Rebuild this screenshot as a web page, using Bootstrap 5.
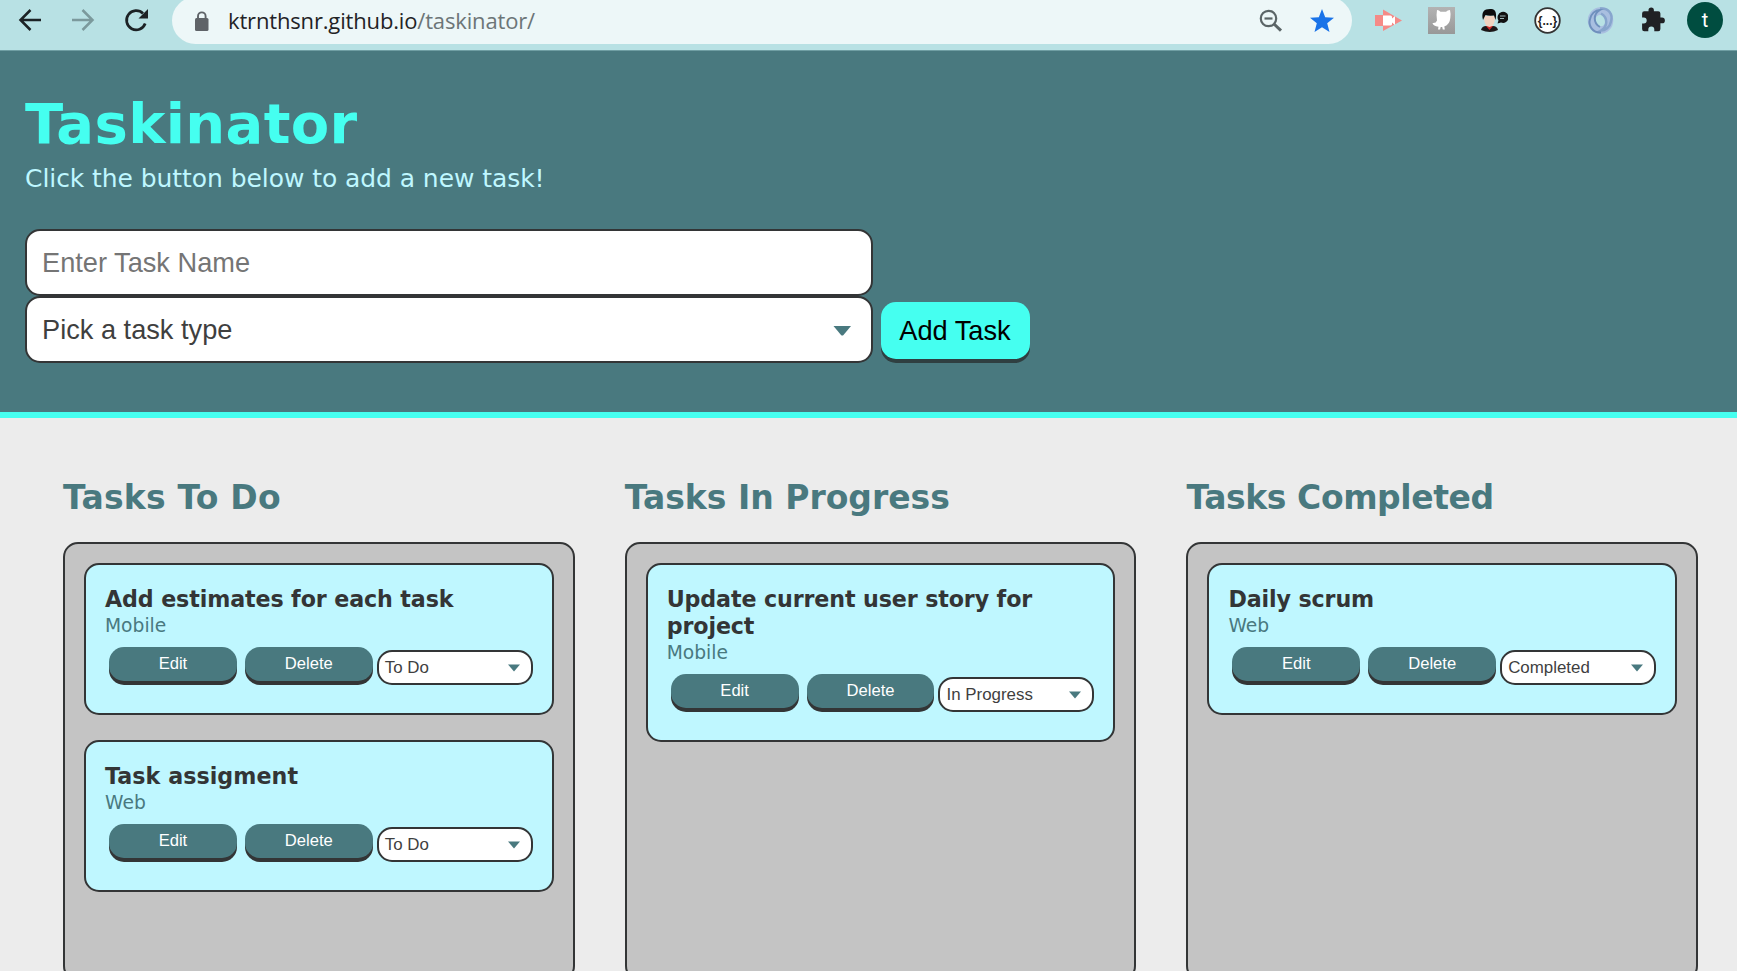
<!DOCTYPE html>
<html lang="en">
<head>
<meta charset="utf-8">
<title>Taskinator</title>
<link href="https://cdn.jsdelivr.net/npm/bootstrap@5.3.0/dist/css/bootstrap.min.css" rel="stylesheet">
<style>
:root{--teal:#49797f;--aqua:#45fff0;--ice:#bff7ff;--ink:#333536}
body{width:1737px;height:971px;background:#ececec;font-family:"DejaVu Sans",sans-serif;line-height:normal}
.chrome{height:50px;background:#b8e1e4}
.chrome svg{display:block;flex:none}
.nav-icons{padding-left:16px;gap:26px;height:40px;width:172px}
.omni{width:1180px;height:47px;margin-top:-3px;border-radius:24px;background:#edf7f8;padding:3px 16px 0 21px}
.url{font:22px/40px "Open Sans",sans-serif;color:#1f2326;margin:-5px 0 0 18px;white-space:pre;letter-spacing:-.16px}
.url span{color:#6c7577}
.ext{height:40px;margin-left:23px;gap:26px}
.hero{height:368px;background:var(--teal);border-bottom:6px solid var(--aqua);border-top:1px solid #6f9ea3;padding:39px 25px 0}
.hero h1{font-size:56px;font-weight:700;line-height:68px;color:var(--aqua);margin:0;letter-spacing:.35px}
.hero p{font-size:25px;line-height:30px;color:var(--ice);margin:6px 0 0;letter-spacing:-.07px}
.field{width:848px;height:67px;border:2px solid var(--ink);border-radius:15px;background:#fff;padding:0 18px 0 15px;font:27.2px "Liberation Sans",sans-serif;color:#3f3f3f}
.field::placeholder{color:#757575;opacity:1}
.hero-form{margin-top:35px;gap:8px}
.add{width:149px;height:57px;border:0;border-radius:15px;background:var(--aqua);color:#000;font:27.2px "Liberation Sans",sans-serif;box-shadow:0 4px 0 #2f3f41;margin-bottom:4px;padding:0 1px 0 0}
.board{padding:60px 39px 0 63px;gap:50px}
.lane{width:511.7px}
.lane h2{font-size:33px;font-weight:700;line-height:40px;color:var(--teal);margin:0 0 24px;white-space:nowrap}
.lane:first-child h2{letter-spacing:.2px}
.lane:last-child h2{letter-spacing:-.42px}
.lane-box{height:439px;border:2px solid var(--ink);border-radius:15px;background:#c4c4c4;padding:19px;gap:25px}
.task{border:2px solid var(--ink);border-radius:15px;background:var(--ice);padding:21px 19px 28px 19px}
.task h3{font-size:22.2px;font-weight:700;line-height:27px;color:var(--ink);margin:0;letter-spacing:-.12px}
.kind{font-size:18.7px;line-height:25px;color:var(--teal)}
.actions{margin:9px 0 0 4px}
.act{width:128px;height:34px;border:0;border-radius:15px;background:var(--teal);color:#fff;box-shadow:0 4px 0 var(--ink);font:16.600px/32px "Liberation Sans",sans-serif;padding:0 0 1px;margin-right:8px}
.state{width:156px;height:35px;margin:3px 0 0 -4px;border:2px solid var(--ink);border-radius:15px;background:#fff;color:#3f3f3f;font:16.900px "Liberation Sans",sans-serif;padding:0 11px 0 6px}
</style>
</head>
<body class="overflow-hidden">
<div class="chrome d-flex align-items-start">
  <div class="nav-icons d-flex align-items-center">
    <svg width="27" height="40" viewBox="0 0 27 40" fill="none" stroke="#1c2225" stroke-width="2.5"><path d="M25 20H5M14.500 10 4.500 20l10 10"/></svg>
    <svg width="27" height="40" viewBox="0 0 27 40" fill="none" stroke="#7b999c" stroke-width="2.5"><path d="M3 20h20M13.500 10l10 10-10 10"/></svg>
    <svg width="27" height="40" viewBox="0 0 27 40" fill="none" stroke="#1c2225" stroke-width="2.7"><path d="M23.200 23.500A9.600 9.600 0 1 1 21 13.500"/><path d="M26 9v9.500h-9.500z" fill="#1c2225" stroke="none"/></svg>
  </div>
  <div class="omni d-flex align-items-center">
    <svg width="17" height="40" viewBox="0 0 17 40"><rect x="2" y="16" width="13.500" height="13" rx="1.500" fill="#5f6368"/><path d="M5 16v-1.800a3.800 3.800 0 0 1 7.600 0V16" fill="none" stroke="#5f6368" stroke-width="1.900"/></svg>
    <div class="url">ktrnthsnr.github.io<span>/taskinator/</span></div>
    <div class="d-flex ms-auto" style="gap:26px">
      <svg width="26" height="40" viewBox="0 0 26 40" fill="none" stroke="#5b6567" stroke-width="2.2"><circle cx="10.500" cy="16.500" r="7.700"/><path d="M6.500 16.500h8"/><path d="m16 22 7 6.700" stroke-width="3"/></svg>
      <svg width="26" height="40" viewBox="0 0 26 40"><path d="m12 7 3.200 8.200 8.800.5-6.800 5.600 2.300 8.700L12 25.200 4.500 30l2.300-8.700L0 15.700l8.800-.5z" fill="#1a73e8"/></svg>
    </div>
  </div>
  <div class="ext d-flex align-items-center">
    <svg width="27" height="40" viewBox="0 0 27 40"><path d="M0 15h8V9.500l19 11L8 31v-5H0z" fill="#f58a87"/><path d="M8 15.500h7.500q1.500 0 1.500 1.500v1.500l3-2.500v9l-3-2.500V24q0 1.500-1.500 1.500H8z" fill="#fff"/></svg>
    <svg width="27" height="40" viewBox="0 0 27 40"><defs><linearGradient id="g" x2="0" y2="1"><stop stop-color="#b3b3b3"/><stop offset="1" stop-color="#989898"/></linearGradient></defs><rect y="7" width="27" height="27" fill="url(#g)"/><path d="M9 10q2 0 3.500 1.700h5.500Q19.500 10 22 10q1 4 .3 8-.5 6.500-6 8.500l.5 3h-2l-.6-2.500h-1.500l-.6 2.500H10l.5-2.800C7 26.500 5 25 4.500 23q3.500.5 4.500-2.500-1-5 0-10.500z" fill="#fff"/></svg>
    <svg width="27" height="40" viewBox="0 0 27 40"><path d="M0 30q1-4 5-4h7q4 0 5 4-8 4-17 0z" fill="#1c1718"/><path d="M5 26h7l-3.500 4z" fill="#d22a28"/><path d="M3 16h11q0 11-5.500 11T3 16z" fill="#f2d2bf"/><path d="M2 20C0 12 3 9 9 9c6-1 7 5 5.500 11L13 15.500q-6 .5-8.500-.5z" fill="#0c0c0c"/><path d="M16.500 23.500l1-3A5.500 5.500 0 1 1 20 22.500z" fill="#111"/><path d="M19 16h5.500M19 18.500h4" stroke="#9db5b7"/></svg>
    <svg width="27" height="40" viewBox="0 0 27 40"><circle cx="13.500" cy="20.500" r="12.300" fill="#fff" stroke="#333" stroke-width="1.800"/><text x="13.500" y="24.500" text-anchor="middle" font-size="12" font-weight="700" font-family="Liberation Sans" fill="#222">{...}</text></svg>
    <svg width="27" height="40" viewBox="0 0 27 40" fill="none"><ellipse cx="13.500" cy="20.500" rx="9" ry="9.500" stroke="#a9bfe0" stroke-width="7.500"/><path d="M13 8.500c9-1 13 6 11 13-1 6-6 9-10 9 7-4 7-13 0-17" stroke="#87a5cd" stroke-width="2.500"/><path d="M14 32.500C6 33 1 26 3 19c1-5 5-9 10-9-7 4-7 13 0 17" stroke="#6f90bd" stroke-width="2"/></svg>
    <svg width="27" height="40" viewBox="0 0 27 40"><path d="M22 17.500h-1.600v-4a2.200 2.200 0 0 0-2.200-2.200h-4.300v-1a2.700 2.700 0 0 0-5.400 0v1H4.300a2.200 2.200 0 0 0-2.200 2.200v4h1.600a3 3 0 0 1 0 6H2.100V29a2.200 2.200 0 0 0 2.200 2.200h4V29.600a3 3 0 0 1 6 0v1.600h3.900a2.200 2.200 0 0 0 2.200-2.200v-5.700H22a2.900 2.900 0 0 0 0-5.800z" fill="#202124"/></svg>
    <svg width="36" height="40" viewBox="0 0 36 40" style="margin-left:-6px"><circle cx="18" cy="20" r="18" fill="#004d40"/><text x="18" y="27" text-anchor="middle" font-size="20" fill="#fff" font-family="Roboto">t</text></svg>
  </div>
</div>
<header class="hero">
  <h1>Taskinator</h1>
  <p>Click the button below to add a new task!</p>
  <form class="hero-form d-flex align-items-end">
    <div class="d-flex flex-column">
      <input class="field" placeholder="Enter Task Name">
      <div class="field d-flex align-items-center justify-content-between"><span>Pick a task type</span><svg width="20" height="12" viewBox="0 0 20 12" style="margin-top:2px"><path d="M.5 1h17.500l-7.500 9q-1.200 1-2.500 0z" fill="#49797f"/></svg></div>
    </div>
    <button class="add" type="button">Add Task</button>
  </form>
</header>
<main class="board d-flex">
  <section class="lane"><h2>Tasks To Do</h2>
    <div class="lane-box d-flex flex-column">
      <article class="task"><h3>Add estimates for each task</h3><div class="kind">Mobile</div>
        <div class="actions d-flex"><button class="act">Edit</button><button class="act">Delete</button><div class="state d-flex align-items-center justify-content-between"><span>To Do</span><svg width="12" height="8" viewBox="0 0 12 8"><path d="M0 .5h12L6 7.500z" fill="#49797f"/></svg></div></div></article>
      <article class="task"><h3 style="letter-spacing:.05px">Task assigment</h3><div class="kind">Web</div>
        <div class="actions d-flex"><button class="act">Edit</button><button class="act">Delete</button><div class="state d-flex align-items-center justify-content-between"><span>To Do</span><svg width="12" height="8" viewBox="0 0 12 8"><path d="M0 .5h12L6 7.500z" fill="#49797f"/></svg></div></div></article>
    </div>
  </section>
  <section class="lane"><h2>Tasks In Progress</h2>
    <div class="lane-box d-flex flex-column">
      <article class="task"><h3>Update current user story for project</h3><div class="kind">Mobile</div>
        <div class="actions d-flex"><button class="act">Edit</button><button class="act">Delete</button><div class="state d-flex align-items-center justify-content-between"><span>In Progress</span><svg width="12" height="8" viewBox="0 0 12 8"><path d="M0 .5h12L6 7.500z" fill="#49797f"/></svg></div></div></article>
    </div>
  </section>
  <section class="lane"><h2>Tasks Completed</h2>
    <div class="lane-box d-flex flex-column">
      <article class="task"><h3>Daily scrum</h3><div class="kind">Web</div>
        <div class="actions d-flex"><button class="act">Edit</button><button class="act">Delete</button><div class="state d-flex align-items-center justify-content-between"><span>Completed</span><svg width="12" height="8" viewBox="0 0 12 8"><path d="M0 .5h12L6 7.500z" fill="#49797f"/></svg></div></div></article>
    </div>
  </section>
</main>
<script src="https://cdn.jsdelivr.net/npm/bootstrap@5.3.0/dist/js/bootstrap.bundle.min.js"></script>
</body>
</html>
